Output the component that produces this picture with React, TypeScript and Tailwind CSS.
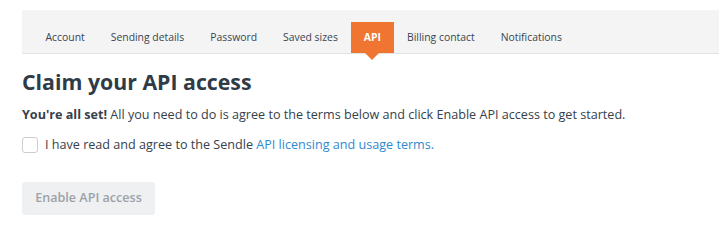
import { useState } from "react";

const tabs = [
  "Account",
  "Sending details",
  "Password",
  "Saved sizes",
  "API",
  "Billing contact",
  "Notifications",
];

export default function App() {
  const [agreed, setAgreed] = useState(false);
  const active = "API";

  return (
    <div
      className="min-h-screen bg-white pl-[22px] pt-[10px] text-[#35414c]"
      style={{ fontFamily: '"Open Sans", "Liberation Sans", sans-serif' }}
    >
      {/* Tab strip */}
      <div className="flex items-end h-[44px] bg-[#f4f4f4] border-b border-[#e3e3e3] pl-[10.5px]">
        {tabs.map((t) =>
          t === active ? (
            <div
              key={t}
              className="relative h-[31px] px-[13px] flex items-center bg-[#ef7530] text-white text-[10.4px] font-bold"
            >
              {t}
              <span className="absolute left-1/2 -translate-x-1/2 top-full w-0 h-0 border-l-[7px] border-r-[7px] border-t-[7px] border-l-transparent border-r-transparent border-t-[#ef7530]" />
            </div>
          ) : (
            <div
              key={t}
              className="h-[31px] px-[13px] flex items-center text-[10.4px] text-[#3a4550]"
            >
              {t}
            </div>
          )
        )}
      </div>

      <h1 className="mt-[14px] text-[21.3px] leading-[28px] font-bold text-[#2f3b46]">
        Claim your API access
      </h1>

      <p className="mt-[10px] text-[12.6px] leading-[18px] text-[#35414c]">
        <span className="font-bold">You're all set!</span> All you need to do is
        agree to the terms below and click Enable API access to get started.
      </p>

      <label className="mt-[12px] flex items-center gap-[7px] text-[12.6px] leading-[18px] cursor-pointer">
        <input
          type="checkbox"
          checked={agreed}
          onChange={(e) => setAgreed(e.target.checked)}
          className="appearance-none w-[16px] h-[16px] rounded-[3px] border border-[#c9cdd1] bg-white"
        />
        <span>
          I have read and agree to the Sendle{" "}
          <a className="text-[#2f8ad0]">API licensing and usage terms.</a>
        </span>
      </label>

      <button
        disabled={!agreed}
        className="mt-[28px] h-[33px] w-[133px] rounded-[3px] bg-[#eef0f2] text-[12.6px] font-semibold text-[#9ca2a8]"
      >
        Enable API access
      </button>
    </div>
  );
}
